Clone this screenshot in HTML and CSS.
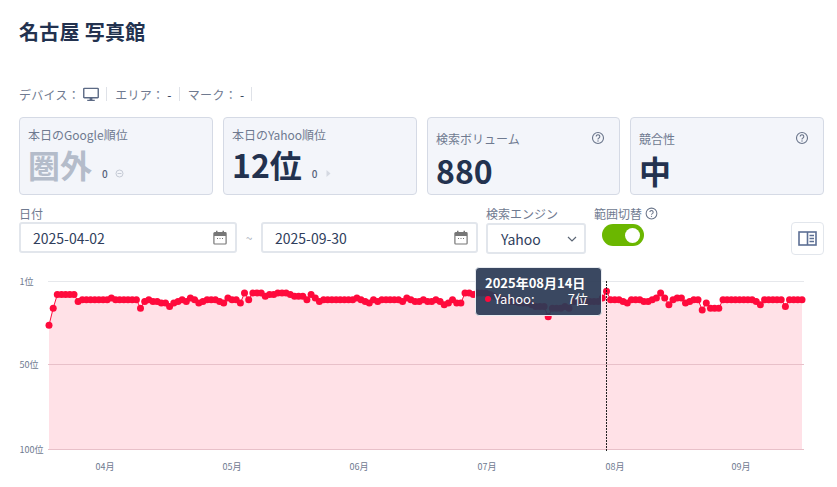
FILE: index.html
```html
<!DOCTYPE html>
<html lang="ja">
<head>
<meta charset="utf-8">
<title>名古屋 写真館</title>
<link rel="stylesheet" href="styles.css">
</head>
<body>
<main class="page">
  <h1 class="title">名古屋 写真館</h1>
  <div class="meta">
    <span class="meta-item">デバイス：
      <svg class="monitor" width="17" height="15" viewBox="0 0 17 15"><path d="M1.500 1h14a.7.7 0 0 1 .7.7v8.600a.7.7 0 0 1-.7.7h-14a.7.7 0 0 1-.7-.7V1.700a.7.7 0 0 1 .7-.7z" fill="none" stroke="#5c6a85" stroke-width="1.500"/><path d="M7 11h3v2h2.500v1.300h-8V13H7z" fill="#5c6a85"/></svg>
    </span>
    <span class="meta-item">エリア：<b class="dash">-</b></span>
    <span class="meta-item">マーク：<b class="dash">-</b></span>
  </div>
  <section class="cards">
    <article class="card">
      <div class="card-label">本日のGoogle順位</div>
      <div class="card-value">
        <span class="big muted">圏外</span><span class="delta">0</span>
        <svg class="delta-icon" width="9" height="9" viewBox="0 0 9 9"><circle cx="4.500" cy="4.500" r="3.500" fill="none" stroke="#c5cad5"/><path d="M2.500 4.500h4" stroke="#c5cad5"/></svg>
      </div>
    </article>
    <article class="card">
      <div class="card-label">本日のYahoo順位</div>
      <div class="card-value">
        <span class="big">12位</span><span class="delta">0</span>
        <svg class="delta-icon" width="9" height="9" viewBox="0 0 9 9"><path d="M2.500 1l4 3.500-4 3.500z" fill="#d5d9e2"/></svg>
      </div>
    </article>
    <article class="card card-help">
      <div class="card-label">検索ボリューム
        <svg class="help" width="14" height="14" viewBox="0 0 14 14"><circle cx="7" cy="7" r="5.500" fill="none" stroke="#69748a" stroke-width="1.100"/><path d="M5.200 5.500a1.800 1.800 0 1 1 2.700 1.600c-.6.300-.9.700-.9 1.300" fill="none" stroke="#69748a" stroke-width="1.100"/><circle cx="7" cy="10" r=".7" fill="#69748a"/></svg>
      </div>
      <div class="card-value"><span class="big">880</span></div>
    </article>
    <article class="card card-help">
      <div class="card-label">競合性
        <svg class="help" width="14" height="14" viewBox="0 0 14 14"><circle cx="7" cy="7" r="5.500" fill="none" stroke="#69748a" stroke-width="1.100"/><path d="M5.200 5.500a1.800 1.800 0 1 1 2.700 1.600c-.6.300-.9.700-.9 1.300" fill="none" stroke="#69748a" stroke-width="1.100"/><circle cx="7" cy="10" r=".7" fill="#69748a"/></svg>
      </div>
      <div class="card-value"><span class="big">中</span></div>
    </article>
  </section>
  <section class="filters">
    <div class="field">
      <label class="field-label">日付</label>
      <div class="date-range">
        <div class="input date">2025-04-02
          <svg class="cal" width="14" height="15" viewBox="0 0 14 15"><path d="M1.700 2.700h10.600a.8.800 0 0 1 .8.800v9.700a.8.800 0 0 1-.8.800H1.700a.8.800 0 0 1-.8-.8V3.500a.8.800 0 0 1 .8-.8z" fill="none" stroke="#777" stroke-width="1.200"/><path d="M1 3h12v3H1zM3 .8h1.500v2H3zM9.500.8H11v2H9.500z" fill="#777"/><path d="M4 8.500h1M6.500 8.500h1M9 8.500h1" stroke="#777"/></svg>
        </div>
        <span class="tilde">~</span>
        <div class="input date">2025-09-30
          <svg class="cal" width="14" height="15" viewBox="0 0 14 15"><path d="M1.700 2.700h10.600a.8.800 0 0 1 .8.800v9.700a.8.800 0 0 1-.8.800H1.700a.8.800 0 0 1-.8-.8V3.500a.8.800 0 0 1 .8-.8z" fill="none" stroke="#777" stroke-width="1.200"/><path d="M1 3h12v3H1zM3 .8h1.500v2H3zM9.500.8H11v2H9.500z" fill="#777"/><path d="M4 8.500h1M6.500 8.500h1M9 8.500h1" stroke="#777"/></svg>
        </div>
      </div>
    </div>
    <div class="field">
      <label class="field-label">検索エンジン</label>
      <div class="input select">Yahoo
        <svg width="10" height="6" viewBox="0 0 10 6"><path d="M1 1l4 4 4-4" fill="none" stroke="#5c6675" stroke-width="1.200"/></svg>
      </div>
    </div>
    <div class="field">
      <label class="field-label">範囲切替
        <svg class="help" width="13" height="13" viewBox="0 0 14 14"><circle cx="7" cy="7" r="5.800" fill="none" stroke="#69748a" stroke-width="1.100"/><path d="M5.200 5.500a1.800 1.800 0 1 1 2.700 1.600c-.6.300-.9.700-.9 1.300" fill="none" stroke="#69748a" stroke-width="1.100"/><circle cx="7" cy="10" r=".7" fill="#69748a"/></svg>
      </label>
      <div class="toggle"><span class="knob"></span></div>
    </div>
    <button class="panel-btn" type="button" aria-label="パネル切替">
      <svg width="19" height="15" viewBox="0 0 19 15"><rect x="1" y="1" width="17" height="13" fill="none" stroke="#5c6f94" stroke-width="1.600"/><path d="M9.500 1v13" stroke="#5c6f94" stroke-width="1.600"/><path d="M11.500 4.500h4.500M11.500 7.500h4.500M11.500 10.500h4.500" stroke="#5c6f94" stroke-width="1.300"/></svg>
    </button>
  </section>
  <section class="chart">
    <svg id="rank-chart" class="chart-svg" width="818" height="213" viewBox="19 274 818 213"></svg>
    <div class="tooltip">
      <div class="tooltip-title">2025年08月14日</div>
      <div class="tooltip-row"><i class="tooltip-dot"></i><span class="tooltip-name">Yahoo:</span><span class="tooltip-val">7位</span></div>
    </div>
  </section>
</main>
<script src="chart.js"></script>
</body>
</html>
```
FILE: styles.css
```css
* { box-sizing: border-box; }
html, body { margin: 0; padding: 0; height: 100%; overflow: hidden; background: #fff; }
body { font-family: "Noto Sans CJK JP", sans-serif; color: #23324f; }
.page { padding: 0 13px 0 19px; width: 837px; }
.title { margin: 0; padding-top: 18px; height: 85px; font-size: 20px; line-height: 28px; font-weight: 700; color: #23324f; letter-spacing: .3px; }
.meta { display: flex; align-items: center; height: 18px; font-size: 12px; color: #6f7a90; }
.meta-item { display: inline-flex; align-items: center; height: 14px; padding-right: 7px; margin-right: 8px; border-right: 1px solid #dfe2e8; white-space: nowrap; letter-spacing: .3px; }
.monitor { margin-left: 3px; width: 16px; }
.dash { font-weight: 400; color: #23324f; margin-left: 3px; }
.cards { display: grid; grid-template-columns: 194px 194px 193px 194px; gap: 10px; margin-top: 14px; }
.card { height: 78px; padding: 7px 8px; background: #f3f5fa; border: 1px solid #d5dae5; border-radius: 4px; }
.card-label { display: flex; justify-content: space-between; align-items: center; height: 18px; padding-right: 6px; font-size: 12px; color: #6f7a90; }
.card-help .card-label { margin-top: 4px; }
.card-value { display: flex; align-items: baseline; height: 42px; margin-top: 0; }
.card-help .card-value { margin-top: 2px; }
.big { font-size: 32px; font-weight: 700; line-height: 42px; color: #23324f; }
.big.muted { color: #b4bcca; }
.delta { margin-left: 10px; font-size: 10px; font-weight: 500; color: #56617a; }
.delta-icon { margin-left: 7px; }
.help { flex: none; }
.filters { display: flex; align-items: flex-start; margin-top: 10px; height: 50px; }
.field { display: flex; flex-direction: column; margin-right: 8px; }
.field-label { display: flex; align-items: center; gap: 3px; height: 17px; font-size: 12px; color: #6f7a90; }
.date-range { display: flex; align-items: center; }
.input { display: flex; align-items: center; justify-content: space-between; height: 31px; border: 2px solid #e2e6ec; border-radius: 3px; font-size: 14px; color: #2f3e5c; background: #fff; }
.date { width: 218px; padding: 0 8px 0 12px; }
.date-range .date:last-child { width: 217px; }
.tilde { width: 24px; text-align: center; font-size: 12px; color: #a9b0bc; }
.select { width: 100px; padding: 0 5px 0 13px; margin-top: 1px; }
.select svg { margin-right: 2px; }
.toggle { display: flex; align-items: center; justify-content: flex-end; width: 42px; height: 22px; margin: 2px 0 0 8px; padding-right: 4px; background: #6bb700; border-radius: 11px; }
.knob { width: 15px; height: 15px; border-radius: 50%; background: #fff; }
.panel-btn { display: flex; align-items: center; justify-content: center; width: 33px; height: 33px; margin: 17px 0 0 auto; padding: 0; background: #fff; border: 1px solid #e2e6ec; border-radius: 4px; }
.chart { position: relative; height: 213px; margin: 19px 0 0 0; }
.chart-svg { display: block; }
.grid-line { stroke: #e6e8ec; stroke-width: 1; }
.grid-line-soft { stroke: #e8c0c9; stroke-width: 1; }
.area { fill: #ffe1e7; }
.series { fill: none; stroke: #ff0a3c; stroke-width: 1; }
.dot { fill: #ff0a3c; }
.cursor { stroke: #222; stroke-width: 1; stroke-dasharray: 2 1; }
.axis { font-family: "Noto Sans CJK JP", sans-serif; font-size: 9px; fill: #6f7a90; }
.tooltip { position: absolute; left: 456px; top: -7px; width: 127px; height: 49px; padding: 6px 9px; background: rgba(43, 58, 85, .93); border: 1px solid #e8ebf0; border-radius: 4px; color: #fff; }
.tooltip-title { font-size: 13px; font-weight: 700; line-height: 17px; white-space: nowrap; }
.tooltip-row { display: flex; align-items: center; font-size: 13px; line-height: 16px; }
.tooltip-dot { width: 6px; height: 6px; margin-right: 3px; border-radius: 50%; background: #ff0a3c; }
.tooltip-name { flex: 1; }
.tooltip-val { margin-right: 4px; }
```
FILE: chart.js
```js
// Daily rank, 2025-04-02 to 2025-09-30.
var ranks = [
  27,17,9,9,9,9,9,13,12,12,12,12,12,12,12,11,12,12,12,12,12,12,17,13,12,13,13,14,14,16,
  14,13,12,13,11,12,14,13,12,12,12,13,14,11,12,12,14,8,12,8,8,8,10,9,9,8,8,8,9,10,
  10,10,12,9,11,13,12,12,12,12,12,12,12,12,11,12,13,14,12,13,12,12,12,12,12,13,11,12,13,13,
  12,13,13,12,13,15,14,12,14,14,8,8,9,8,8,8,9,10,11,12,12,13,13,14,14,14,15,16,16,16,
  22,17,17,17,16,17,13,13,13,13,13,13,13,11,7,12,12,12,13,14,12,12,12,13,13,12,11,8,11,15,
  12,11,11,14,13,12,12,18,14,17,17,17,12,12,12,12,12,12,12,12,13,15,12,12,12,12,12,16,12,12,
  12,12
];
var NS = 'http://www.w3.org/2000/svg';
var svg = document.getElementById('rank-chart');
var LEFT = 49, RIGHT = 802;
var step = (RIGHT - LEFT) / (ranks.length - 1);
function y(rank) { return 281 + (rank - 1) * 1.7; }
function x(i) { return LEFT + i * step; }
function add(tag, attrs, text) {
  var el = document.createElementNS(NS, tag);
  for (var k in attrs) el.setAttribute(k, attrs[k]);
  if (text) el.textContent = text;
  svg.appendChild(el);
  return el;
}
var pts = ranks.map(function (r, i) { return x(i).toFixed(1) + ',' + y(r).toFixed(1); });
add('polygon', { 'class': 'area', points: LEFT + ',449.5 ' + pts.join(' ') + ' ' + RIGHT + ',449.5' });
add('line', { 'class': 'grid-line', x1: 48, x2: 804, y1: 281.5, y2: 281.5 });
add('line', { 'class': 'grid-line-soft', x1: 48, x2: 804, y1: 364.5, y2: 364.5 });
add('line', { 'class': 'grid-line-soft', x1: 48, x2: 804, y1: 449.5, y2: 449.5 });
add('polyline', { 'class': 'series', points: pts.join(' ') });
ranks.forEach(function (r, i) { add('circle', { 'class': 'dot', cx: x(i).toFixed(1), cy: y(r).toFixed(1), r: 3.5 }); });
add('line', { 'class': 'cursor', x1: 606.5, x2: 606.5, y1: 281, y2: 452 });
[['1位', 285], ['50位', 368], ['100位', 453]].forEach(function (t) { add('text', { 'class': 'axis', x: 19.5, y: t[1] }, t[0]); });
[['04月', 105], ['05月', 232], ['06月', 359], ['07月', 487], ['08月', 615], ['09月', 741]].forEach(function (t) {
  add('text', { 'class': 'axis', x: t[1], y: 470, 'text-anchor': 'middle' }, t[0]);
});
```
